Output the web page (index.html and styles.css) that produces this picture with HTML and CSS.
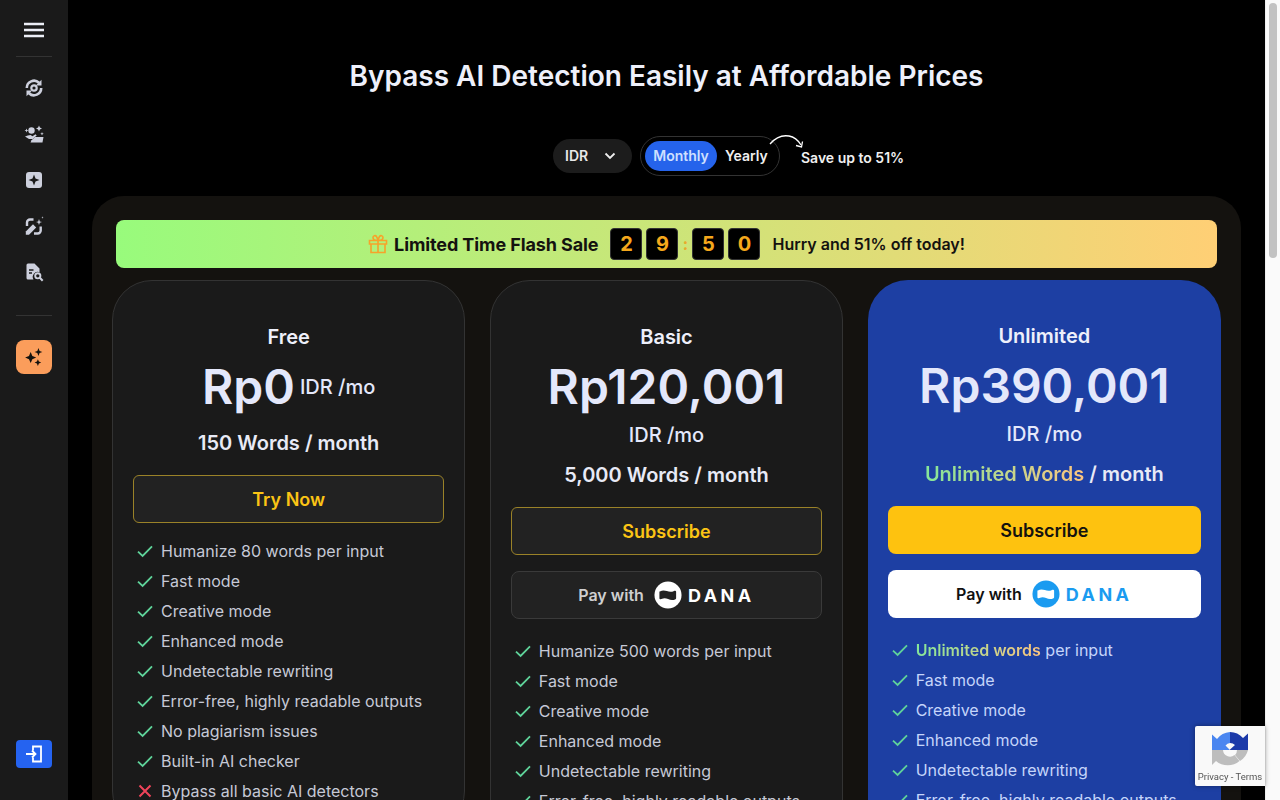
FILE: index.html
```html
<!DOCTYPE html>
<html lang="en">
<head>
<meta charset="utf-8">
<title>Pricing</title>
<link rel="stylesheet" href="styles.css">
</head>
<body>
<svg class="defs" width="0" height="0" aria-hidden="true">
  <symbol id="check" viewBox="0 0 16 16"><path d="M1 8.600 5.600 13 15 3.400" fill="none" stroke="currentColor" stroke-width="1.800"/></symbol>
  <symbol id="cross" viewBox="0 0 16 16"><path d="M2.500 2.500l11 11M13.500 2.500l-11 11" fill="none" stroke="currentColor" stroke-width="2"/></symbol>
  <symbol id="dana" viewBox="0 0 30 30"><circle cx="15" cy="15" r="14.500" fill="currentColor"/><path class="dana-flag" d="M6.300 11.200c2.700-1.500 5-1.200 7.500-.4 2.600.9 5 1.100 7.700-.2.700-.4 2.200-.2 2.200.9v7c0 .5-.2.800-.6 1-2.800 1.300-5.300 1.100-8-.1-2.400-1-4.700-1.200-7.200 0-.9.400-2.100.1-2.100-1v-7.200z"/></symbol>
</svg>
<div class="app">
  <aside class="sidebar">
    <div class="side-top">
      <svg class="burger" width="20" height="16" viewBox="0 0 20 16"><path d="M0 2h20M0 8h20M0 14h20" stroke="#eceef6" stroke-width="2.400"/></svg>
    </div>
    <nav class="side-nav">
      <svg class="nav-icon" viewBox="0 0 20 20"><path d="M2.800 10A7.200 7.200 0 0 1 15 4.800M17.200 10A7.200 7.200 0 0 1 5 15.200" fill="none" stroke="#cdd0dd" stroke-width="2.600"/><path d="M17.500 1.800v5.700h-5.700zM2.500 18.200v-5.700h5.700z" fill="#cdd0dd"/><circle cx="10" cy="10" r="2.700" fill="none" stroke="#cdd0dd" stroke-width="2.200"/></svg>
      <svg class="nav-icon" viewBox="0 0 20 20"><circle cx="7.500" cy="6.500" r="3.200" fill="#cdd0dd"/><path d="M1 12.500c2-.8 3.500-1.600 5.500-1.600l2 1.400 3-2 1.200 1.200-4 3.500H5z" fill="#cdd0dd"/><path d="M6.500 18.500l1-2.200 3.500-3.300h8.500l-1 5.500z" fill="#cdd0dd"/><path d="M15 1.500l.9 2.100 2.100.9-2.100.9-.9 2.100-.9-2.100-2.100-.9 2.100-.9zM2.500 4.500l.6 1.400 1.400.6-1.400.6-.6 1.400-.6-1.400L.5 6.500l1.400-.6zM18 8l.5 1.200 1.200.5-1.200.5-.5 1.200-.5-1.200-1.200-.5 1.200-.5z" fill="#cdd0dd"/></svg>
      <svg class="nav-icon" viewBox="0 0 20 20"><rect x="2" y="2" width="16" height="16" rx="3" fill="#cdd0dd"/><path d="M10 4.500l1.500 4 4 1.500-4 1.500-1.500 4-1.500-4-4-1.500 4-1.500z" fill="#1a1a1a"/></svg>
      <svg class="nav-icon" viewBox="0 0 20 20"><path d="M9.500 3.500H6A3 3 0 0 0 3 6.500V10M16.700 10.500v4A3 3 0 0 1 13.700 17.500H10" fill="none" stroke="#cdd0dd" stroke-width="2.400"/><path d="M1.800 15.500l7.200-7.200 3.200 3.200-7.200 7.200H1.800z" fill="#cdd0dd"/><path d="M15 3l.8 2.400L18 6l-2.200.8L15 9l-.8-2.200L12 6l2.200-.6zM18.500.3l.3.900.9.300-.9.300-.3.900-.3-.9-.9-.3.9-.3z" fill="#cdd0dd"/></svg>
      <svg class="nav-icon" viewBox="0 0 20 20"><path d="M2.500 3A1.500 1.500 0 0 1 4 1.500h6.500l5 5v3.700a5 5 0 0 0-6 7.300H4A1.500 1.500 0 0 1 2.500 16z" fill="#cdd0dd"/><path d="M5 8h4.500M5 11h3" stroke="#1a1a1a" stroke-width="1.500"/><circle cx="13.800" cy="13.800" r="2.600" fill="none" stroke="#cdd0dd" stroke-width="1.900"/><path d="M15.800 15.800l2.900 2.900" stroke="#cdd0dd" stroke-width="2.100"/></svg>
    </nav>
    <div class="side-rule"></div>
    <button class="side-btn side-btn-orange" type="button" aria-label="Upgrade">
      <svg width="20" height="20" viewBox="0 0 18 18"><path d="M6 4.500l1.500 3.500L11 9.500 7.500 11 6 14.500 4.500 11 1 9.500 4.500 8zM13 1l1 2.500L16.500 4.500 14 5.500 13 8l-1-2.500L9.500 4.500 12 3.500zM12.500 11l.9 2.100 2.100.9-2.100.9-.9 2.100-.9-2.100-2.100-.9 2.100-.9z" fill="#14120f"/></svg>
    </button>
    <button class="side-btn side-btn-blue" type="button" aria-label="Sign in">
      <svg width="20" height="20" viewBox="0 0 20 20"><path d="M9 6.500V2.500h8v15H9V13.500" fill="none" stroke="#fff" stroke-width="1.800"/><path d="M2 10h9.500M8 6.500l3.500 3.500L8 13.500" fill="none" stroke="#fff" stroke-width="1.800"/></svg>
    </button>
  </aside>

  <main class="main">
    <h1 class="title">Bypass AI Detection Easily at Affordable Prices</h1>
    <div class="controls">
      <button class="currency" type="button"><span class="currency-code">IDR</span>
        <svg width="12" height="8" viewBox="0 0 12 8"><path d="M1.500 1.500 6 6l4.500-4.500" fill="none" stroke="#eee" stroke-width="1.800"/></svg>
      </button>
      <div class="toggle">
        <span class="toggle-on">Monthly</span>
        <span class="toggle-off">Yearly</span>
        <svg class="save-arrow" width="36" height="16" viewBox="0 0 36 16"><path d="M1 10C7 3 14 1 20 2c5 .8 9 4 12 9" fill="none" stroke="#fff" stroke-width="1.300"/><path d="M27 11.500l5.500 1.500 1-5.500" fill="none" stroke="#fff" stroke-width="1.300"/></svg>
        <span class="save">Save up to 51%</span>
      </div>
    </div>

    <section class="panel">
      <div class="flash">
        <svg class="gift" width="20" height="20" viewBox="0 0 20 20"><path d="M1.500 6.500h17v3.500h-17zM3 10h14v8.500H3zM10 6.500v12M10 6.500C7 6.500 5 5.500 5 3.500 5 1.500 7.500 1 8.500 2.500 9.300 3.600 10 6.500 10 6.500zM10 6.500c3 0 5-1 5-3 0-2-2.500-2.500-3.500-1C10.700 3.600 10 6.500 10 6.500z" fill="none" stroke="#f7a22a" stroke-width="1.600"/></svg>
        <strong class="flash-title">Limited Time Flash Sale</strong>
        <div class="clock">
          <span class="digit">2</span><span class="digit">9</span><span class="colon">:</span><span class="digit">5</span><span class="digit">0</span>
        </div>
        <span class="flash-note">Hurry and 51% off today!</span>
      </div>

      <div class="plans">
        <article class="plan">
          <h2 class="plan-name">Free</h2>
          <div class="price"><span class="amount">Rp0</span><span class="per">IDR /mo</span></div>
          <p class="words">150 Words / month</p>
          <div class="actions">
            <button class="cta cta-ghost" type="button">Try Now</button>
          </div>
          <ul class="features">
            <li><svg class="tick"><use href="#check"/></svg>Humanize 80 words per input</li>
            <li><svg class="tick"><use href="#check"/></svg>Fast mode</li>
            <li><svg class="tick"><use href="#check"/></svg>Creative mode</li>
            <li><svg class="tick"><use href="#check"/></svg>Enhanced mode</li>
            <li><svg class="tick"><use href="#check"/></svg>Undetectable rewriting</li>
            <li><svg class="tick"><use href="#check"/></svg>Error-free, highly readable outputs</li>
            <li><svg class="tick"><use href="#check"/></svg>No plagiarism issues</li>
            <li><svg class="tick"><use href="#check"/></svg>Built-in AI checker</li>
            <li><svg class="tick tick-no"><use href="#cross"/></svg>Bypass all basic AI detectors</li>
          </ul>
        </article>

        <article class="plan">
          <h2 class="plan-name">Basic</h2>
          <div class="price"><span class="amount">Rp120,001</span><span class="per">IDR /mo</span></div>
          <p class="words">5,000 Words / month</p>
          <div class="actions">
            <button class="cta cta-ghost" type="button">Subscribe</button>
            <button class="pay" type="button">Pay with
              <span class="dana"><svg class="dana-mark"><use href="#dana"/></svg><span class="dana-text">DANA</span></span>
            </button>
          </div>
          <ul class="features">
            <li><svg class="tick"><use href="#check"/></svg>Humanize 500 words per input</li>
            <li><svg class="tick"><use href="#check"/></svg>Fast mode</li>
            <li><svg class="tick"><use href="#check"/></svg>Creative mode</li>
            <li><svg class="tick"><use href="#check"/></svg>Enhanced mode</li>
            <li><svg class="tick"><use href="#check"/></svg>Undetectable rewriting</li>
            <li><svg class="tick"><use href="#check"/></svg>Error-free, highly readable outputs</li>
          </ul>
        </article>

        <article class="plan plan-top">
          <h2 class="plan-name">Unlimited</h2>
          <div class="price"><span class="amount">Rp390,001</span><span class="per">IDR /mo</span></div>
          <p class="words"><span class="grad">Unlimited Words</span> / month</p>
          <div class="actions">
            <button class="cta cta-solid" type="button">Subscribe</button>
            <button class="pay pay-light" type="button">Pay with
              <span class="dana"><svg class="dana-mark"><use href="#dana"/></svg><span class="dana-text">DANA</span></span>
            </button>
          </div>
          <ul class="features">
            <li><svg class="tick"><use href="#check"/></svg><span><span class="grad grad-strong">Unlimited words</span> per input</span></li>
            <li><svg class="tick"><use href="#check"/></svg>Fast mode</li>
            <li><svg class="tick"><use href="#check"/></svg>Creative mode</li>
            <li><svg class="tick"><use href="#check"/></svg>Enhanced mode</li>
            <li><svg class="tick"><use href="#check"/></svg>Undetectable rewriting</li>
            <li><svg class="tick"><use href="#check"/></svg>Error-free, highly readable outputs</li>
          </ul>
        </article>
      </div>
    </section>
  </main>

  <div class="scrollbar"><div class="scroll-thumb"></div></div>
</div>

<div class="recaptcha">
  <svg class="recaptcha-logo" width="38" height="38" viewBox="0 0 38 38">
    <path d="M19 1v11a7 7 0 0 0-4.500 2.500L19 19H1V3.500L6 8A18 18 0 0 1 19 1z" fill="#4a86f0"/>
    <path d="M19 1a18 18 0 0 1 13 6l5-4.500V19H19v-.5l5-4.500a7 7 0 0 0-5-2z" fill="#1c3aa9"/>
    <path d="M1 19h11a7 7 0 0 0 11.500 5l5 6a18 18 0 0 1-23.500 0l-4 4z" fill="#bdbdbd"/>
    <path d="M26 19h11a18 18 0 0 1-8 11l-5-6a7 7 0 0 0 2-5z" fill="#bdbdbd"/>
  </svg>
  <div class="recaptcha-links">Privacy - Terms</div>
</div>
</body>
</html>
```

FILE: styles.css
```css
* { box-sizing: border-box; }
html, body { margin: 0; height: 100%; overflow: hidden; background: #000; }
body { font-family: Inter, "Liberation Sans", sans-serif; color: #e8eaf6; }
button { font-family: inherit; cursor: pointer; }
h1, h2, p, ul { margin: 0; padding: 0; }
.defs { position: absolute; }

.app { display: flex; height: 800px; overflow: hidden; padding-right: 15px; }

.sidebar { flex: 0 0 68px; background: #1a1a1a; display: flex; flex-direction: column; align-items: center; }
.side-top { width: 36px; height: 57px; padding-top: 22px; display: flex; justify-content: center; align-items: flex-start; border-bottom: 1px solid #333; }
.burger { display: block; }
.side-nav { display: flex; flex-direction: column; gap: 26px; padding-top: 21px; }
.nav-icon { width: 20px; height: 20px; display: block; }
.side-rule { width: 36px; height: 1px; background: #333; margin-top: 33px; }
.side-btn { border: 0; width: 36px; display: flex; align-items: center; justify-content: center; padding: 0; }
.side-btn-orange { height: 34px; margin-top: 24px; background: #fb9d5b; border-radius: 8px; }
.side-btn-blue { height: 28px; margin-top: auto; margin-bottom: 32px; background: #2563f0; border-radius: 4px; }

.main { flex: 1 1 auto; min-width: 0; }
.title { font-size: 28px; line-height: 36px; font-weight: 600; text-align: center; margin-top: 58px; color: #eef0fb; }
.controls { display: flex; justify-content: center; align-items: center; gap: 8px; margin-top: 42px; }
.currency { width: 79px; height: 34px; border: 0; border-radius: 17px; background: #1c1c1c; color: #e8e8e8; font-size: 14px; font-weight: 600; display: flex; align-items: center; justify-content: space-between; padding: 0 16px 0 12px; }
.currency-code { padding-bottom: 2px; }
.toggle { position: relative; width: 140px; height: 40px; border: 1px solid #333; border-radius: 20px; display: flex; align-items: center; padding: 0 4px; font-size: 14px; font-weight: 600; }
.toggle-on { width: 72px; height: 30px; padding-bottom: 1px; border-radius: 15px; background: #2563eb; color: #cfe0ff; display: flex; align-items: center; justify-content: center; }
.toggle-off { margin-left: 8px; padding-bottom: 2px; color: #f0f0f0; }
.save-arrow { position: absolute; left: 128px; top: -3px; }
.save { position: absolute; left: 160px; top: 12px; white-space: nowrap; color: #f0f0f0; }

.panel { margin: 20px 24px 0; background: #14120f; border-radius: 32px 32px 0 0; padding: 24px 24px 40px; }
.flash { height: 48px; border-radius: 8px; background: linear-gradient(90deg, #98fb7c 0%, #ffcf75 100%); display: flex; align-items: center; justify-content: center; color: #14120f; }
.gift { margin-right: 6px; }
.flash-title { font-size: 18px; font-weight: 700; letter-spacing: -.1px; }
.clock { display: flex; align-items: center; gap: 4px; margin: 0 12px; }
.digit { width: 32px; height: 32px; background: #000; border: 1px solid #333; border-radius: 4px; color: #f5a81c; font-size: 20px; font-weight: 700; display: flex; align-items: center; justify-content: center; }
.colon { width: 6px; text-align: center; color: #e9a92c; font-size: 16px; font-weight: 700; }
.flash-note { font-size: 16px; font-weight: 600; }

.plans { display: grid; grid-template-columns: repeat(3, 1fr); gap: 24.5px; margin: 12px -4px 0; align-items: start; }
.plan { background: #1a1a1a; border: 1px solid #333; border-radius: 40px; padding: 42px 20px 24px; }
.plan-top { background: #1d3fa3; border: 0; }
.plan-name { font-size: 20px; line-height: 28px; font-weight: 600; text-align: center; color: #eef0fb; }
.price { display: flex; flex-wrap: wrap; justify-content: center; align-items: center; column-gap: 5px; row-gap: 4px; margin-top: 6px; }
.amount { font-size: 48px; line-height: 60px; font-weight: 600; color: #e4e8fb; }
.per { font-size: 20px; line-height: 28px; font-weight: 500; color: #e4e8fb; }
.words { font-size: 20px; line-height: 28px; font-weight: 600; text-align: center; margin-top: 12px; color: #e8eaf6; }
.grad { background: linear-gradient(90deg, #84e69a, #fdc57f); -webkit-background-clip: text; background-clip: text; color: transparent; }
.grad-strong { font-weight: 600; }

.actions { display: flex; flex-direction: column; gap: 16px; margin-top: 18px; }
.cta { height: 48px; border-radius: 6px; font-size: 18px; font-weight: 600; }
.cta-ghost { background: #222; border: 1px solid #9a8228; color: #fbc415; }
.cta-solid { background: #fec20f; border: 0; color: #14120f; border-radius: 8px; }
.pay { height: 48px; border-radius: 8px; border: 1px solid #3a3a3a; background: #222; color: #cfcfcf; font-size: 16px; font-weight: 600; display: flex; align-items: center; justify-content: center; gap: 10px; margin-bottom: 4px; --flag: #222; }
.pay-light { background: #fff; border: 0; color: #111; --flag: #fff; }
.dana { display: flex; align-items: center; gap: 6px; color: #fff; }
.pay-light .dana { color: #1a9bf0; }
.dana-mark { width: 28px; height: 28px; display: block; }
.dana-flag { fill: var(--flag); }
.dana-text { font-size: 18px; font-weight: 700; letter-spacing: 3.500px; }

.features { list-style: none; margin-top: 13px; padding-left: 4px; }
.features li { display: flex; align-items: center; gap: 8px; height: 30px; font-size: 16px; color: #c6c9d6; white-space: nowrap; }
.plan-top .features li { color: #c5d5fa; }
.tick { width: 16px; height: 16px; flex: none; color: #5fd39a; }
.tick-no { color: #f0445a; }

.scrollbar { position: fixed; top: 0; right: 0; bottom: 0; width: 15px; background: #fafafa; border-left: 1px solid #eee; }
.scroll-thumb { margin: 3px 3px 0 3px; height: 255px; border-radius: 4px; background: #c2c2c2; }

.recaptcha { position: fixed; left: 1195px; top: 726px; width: 70px; height: 60px; background: #f9f9f9; border-radius: 2px 0 0 2px; box-shadow: 0 0 5px rgba(0,0,0,.4); display: flex; flex-direction: column; align-items: center; }
.recaptcha-logo { margin-top: 5px; }
.recaptcha-links { font-family: Roboto, Inter, sans-serif; font-size: 9.500px; line-height: 12px; color: #555; margin-top: 2px; white-space: nowrap; }
```
